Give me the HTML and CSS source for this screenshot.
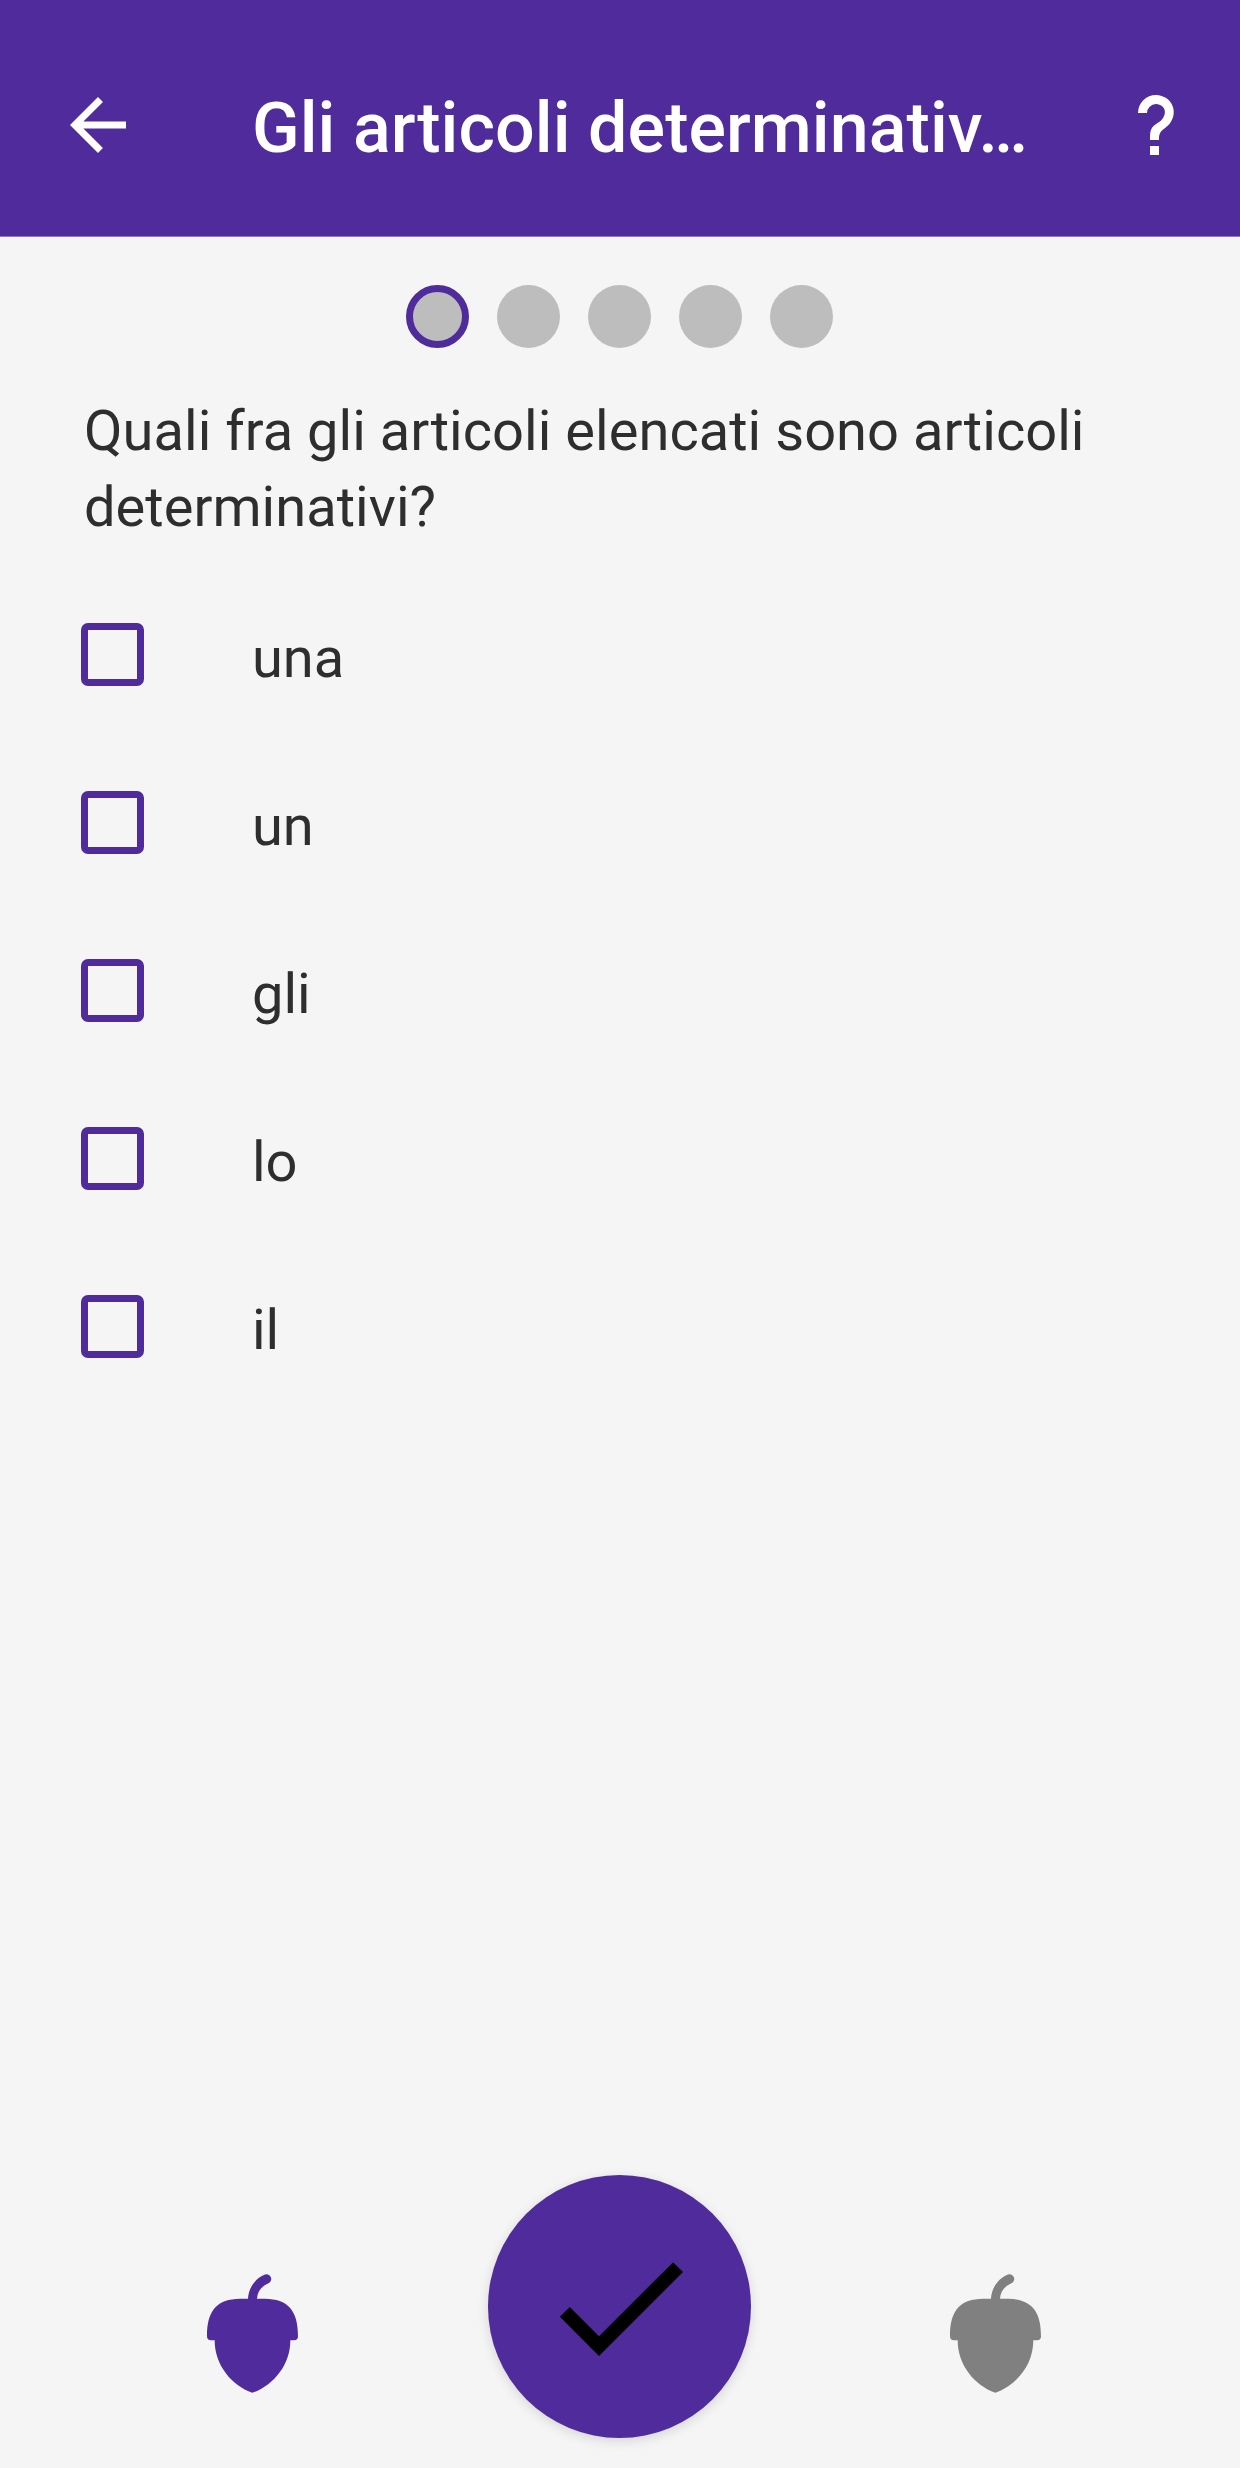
FILE: index.html
```
<!DOCTYPE html>
<html lang="it">
<head>
    <meta charset="UTF-8">
    <meta name="viewport" content="width=device-width, initial-scale=1.0">
    <title>Gli articoli determinativi</title>
    <link rel="stylesheet" href="styles.css">
</head>
<body>
    <header class="toolbar">
        <svg class="back-icon" viewBox="0 0 24 24"><path d="M20 11H7.83l5.59-5.59L12 4l-8 8 8 8 1.41-1.41L7.83 13H20v-2z"/></svg>
        <h1 class="title">Gli articoli determinativ…</h1>
        <svg class="help-icon" viewBox="0 0 24 24"><path d="M10,19H13V22H10V19M12,2C17.35,2.22 19.68,7.62 16.5,11.67C15.67,12.67 14.33,13.33 13.67,14.17C13,15 13,16 13,17H10C10,15.33 10,13.92 10.67,12.92C11.33,11.92 12.67,11.33 13.5,10.67C15.92,8.43 15.32,5.26 12,5A3,3 0 0,0 9,8H6A6,6 0 0,1 12,2Z"/></svg>
    </header>

    <main class="quiz">
        <div class="progress">
            <span class="dot current"></span>
            <span class="dot"></span>
            <span class="dot"></span>
            <span class="dot"></span>
            <span class="dot"></span>
        </div>

        <p class="question">Quali fra gli articoli elencati sono articoli determinativi?</p>

        <div class="answers">
            <label class="answer"><input type="checkbox" class="checkbox"><span>una</span></label>
            <label class="answer"><input type="checkbox" class="checkbox"><span>un</span></label>
            <label class="answer"><input type="checkbox" class="checkbox"><span>gli</span></label>
            <label class="answer"><input type="checkbox" class="checkbox"><span>lo</span></label>
            <label class="answer"><input type="checkbox" class="checkbox"><span>il</span></label>
        </div>
    </main>

    <footer class="bottom-bar">
        <svg class="acorn" viewBox="51 42 273 356"><path d="M74 240H63Q51 240 51 228C51 150 82 117 150 116H174C175 84 196 54 225 43A14 14 0 0 1 234 70C214 79 202 94 201 116H225C293 117 324 150 324 228Q324 240 312 240H301C301 315 250 375 187 398C125 375 74 315 74 240Z"/></svg>
        <button class="confirm">
            <svg class="check-icon" viewBox="0 0 24 24"><path d="M9 16.17L4.83 12l-1.42 1.41L9 19 21 7l-1.41-1.41z"/></svg>
        </button>
        <svg class="acorn empty" viewBox="51 42 273 356"><path d="M74 240H63Q51 240 51 228C51 150 82 117 150 116H174C175 84 196 54 225 43A14 14 0 0 1 234 70C214 79 202 94 201 116H225C293 117 324 150 324 228Q324 240 312 240H301C301 315 250 375 187 398C125 375 74 315 74 240Z"/></svg>
    </footer>
</body>
</html>
```
FILE: styles.css
```
* {
    box-sizing: border-box;
}

body {
    margin: 0;
    height: 2468px;
    display: flex;
    flex-direction: column;
    background-color: #f5f5f5;
    color: #2e2e2e;
    font-family: Roboto, sans-serif;
}

.toolbar {
    display: flex;
    align-items: center;
    height: 237px;
    padding: 13px 48px 0 56px;
    background-color: #502b9b;
    border-bottom: 1px solid #8f78bf;
    color: white;
}

.back-icon {
    width: 84px;
    height: 84px;
    fill: white;
}

.title {
    flex: 1;
    margin: 7px 0 0 112px;
    font-size: 70px;
    font-weight: 500;
    line-height: 84px;
    letter-spacing: 0.05px;
    white-space: nowrap;
}

.help-icon {
    width: 72px;
    height: 72px;
    fill: white;
}

.quiz {
    flex: 1;
}

.progress {
    display: flex;
    justify-content: center;
    gap: 28px;
    padding: 48px 1px 0 0;
}

.dot {
    width: 63px;
    height: 63px;
    border-radius: 50%;
    background-color: #bdbdbd;
}

.dot.current {
    border: 7px solid #502b9b;
}

.question {
    margin: 45px 84px 0;
    font-size: 56px;
    line-height: 76px;
    letter-spacing: 0.04px;
}

.answers {
    padding: 25.5px 0 0 80.5px;
}

.answer {
    display: flex;
    align-items: center;
    height: 168px;
    font-size: 56px;
    line-height: 76px;
}

.answer span {
    margin: 6px 0 0 108.5px;
}

.checkbox {
    appearance: none;
    width: 63px;
    height: 63px;
    margin: 0;
    border: 7px solid #502b9b;
    border-radius: 7px;
}

.bottom-bar {
    display: flex;
    justify-content: space-between;
    align-items: flex-end;
    padding: 0 199px 30px 207px;
}

.acorn {
    width: 91px;
    height: 119px;
    margin-bottom: 45px;
    fill: #502b9b;
}

.acorn.empty {
    fill: #808080;
}

.confirm {
    display: flex;
    align-items: center;
    justify-content: center;
    width: 263px;
    height: 263px;
    margin-right: 9px;
    padding: 0 0 0 1px;
    border: none;
    border-radius: 50%;
    background-color: #502b9b;
    box-shadow: 0 3px 12px rgba(0, 0, 0, 0.13);
}

.check-icon {
    width: 168px;
    height: 168px;
}
```
